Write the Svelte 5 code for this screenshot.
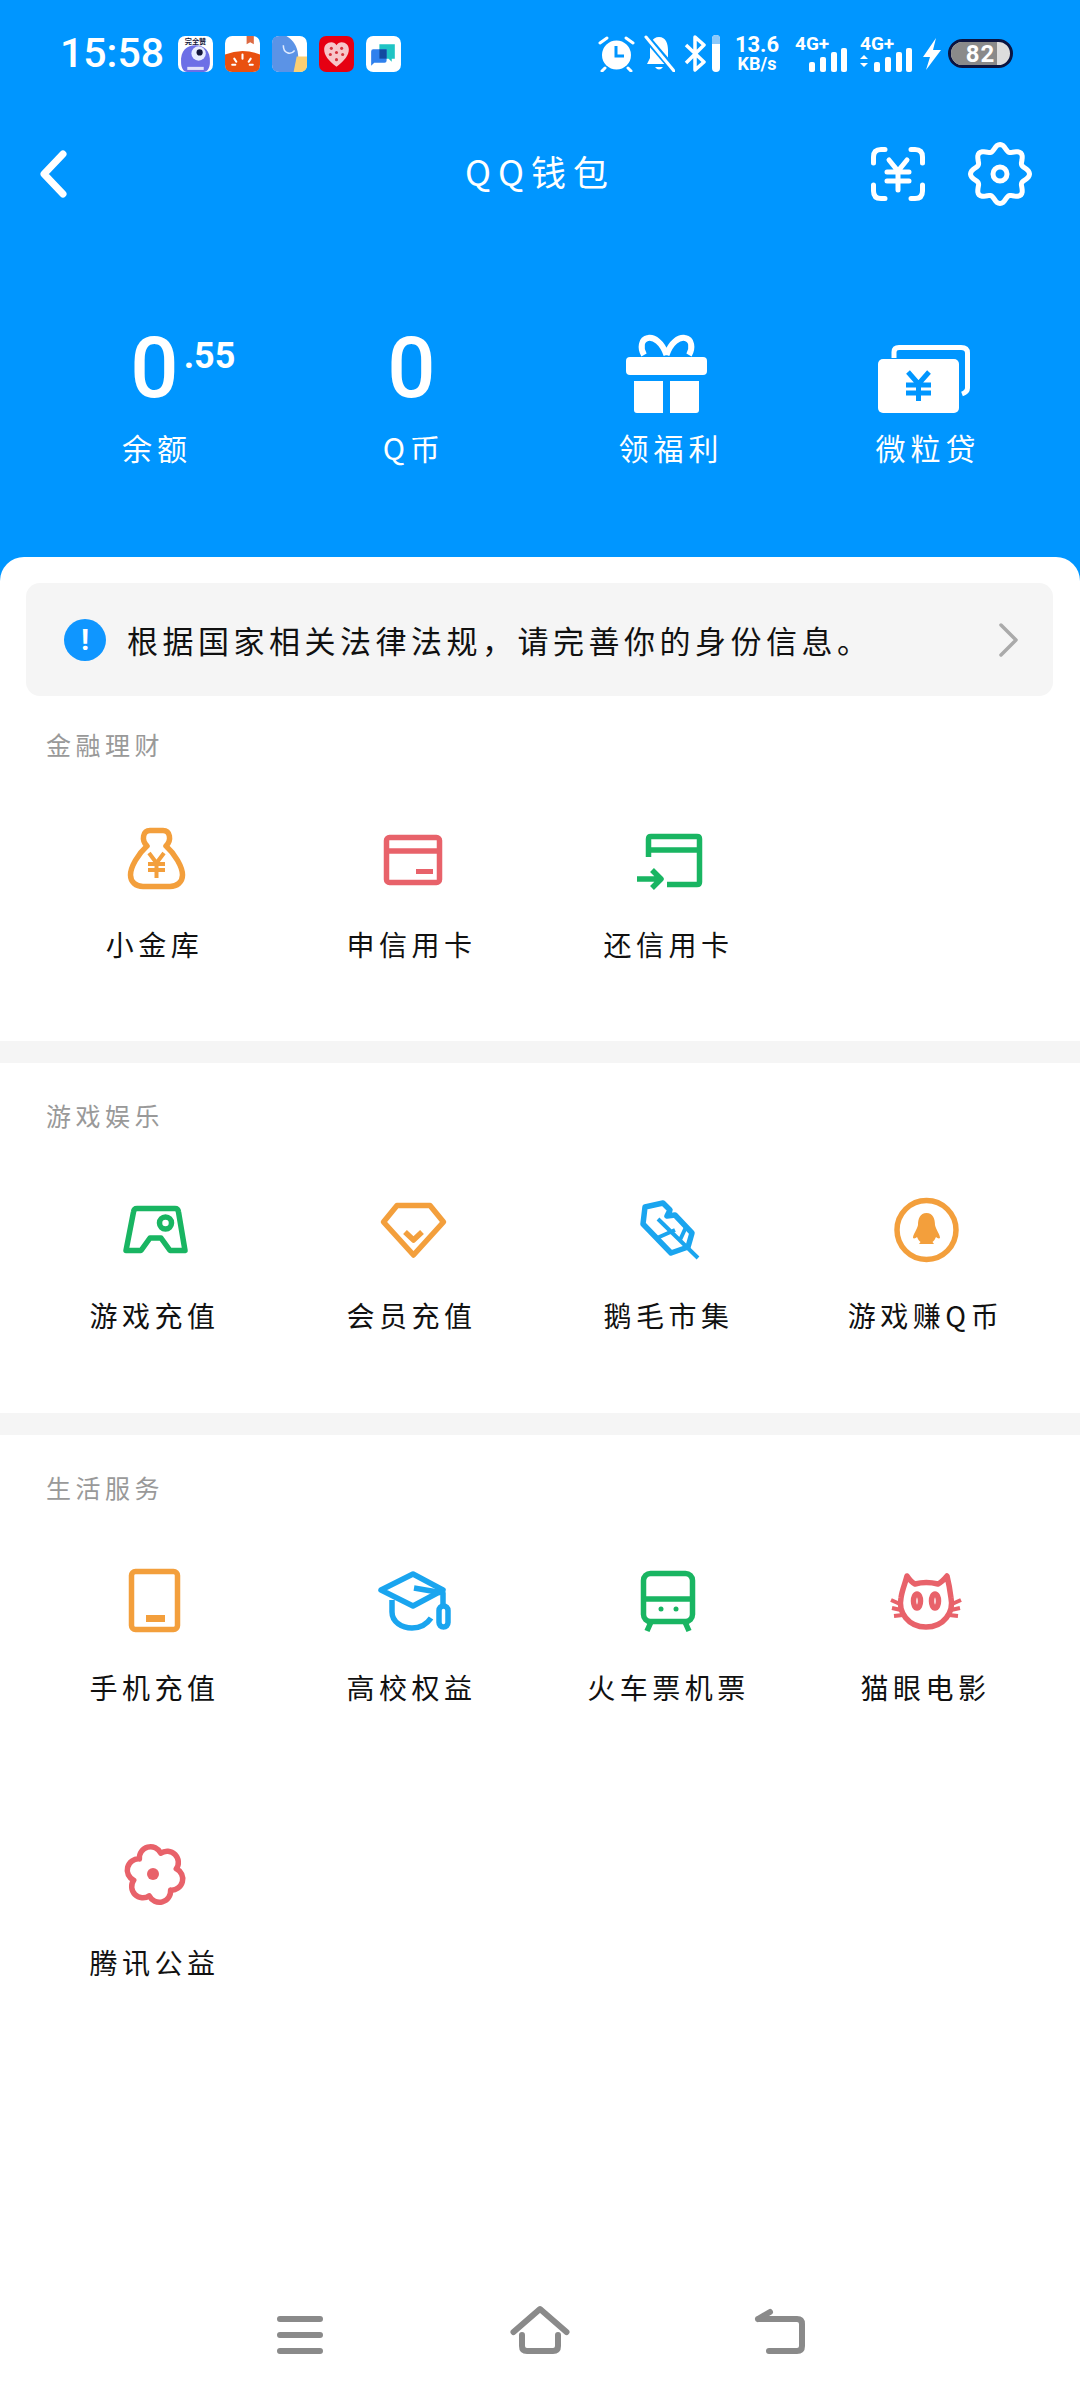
<script>
	// six scalloped petals around the middle of the flower icon
	function flowerPath() {
		let d = "";
		for (let k = 0; k <= 6; k++) {
			let a = ((k * 60 - 15) * Math.PI) / 180;
			let x = (40 + 22 * Math.cos(a)).toFixed(1);
			let y = (39.5 + 22 * Math.sin(a)).toFixed(1);
			d += k === 0 ? `M${x} ${y}` : ` A11.2 11.2 0 0 1 ${x} ${y}`;
		}
		return d + "Z";
	}

	// wavy ring for the settings gear, eight soft teeth
	function gearPath() {
		let pts = [];
		for (let k = 0; k < 120; k++) {
			let a = (k * 3 * Math.PI) / 180;
			let r = 26.5 + 3 * Math.cos(8 * a);
			pts.push(`${(33 + r * Math.sin(a)).toFixed(1)} ${(33 - r * Math.cos(a)).toFixed(1)}`);
		}
		return "M" + pts.join("L") + "Z";
	}

	const sections = [
		{
			title: "金融理财",
			first: true,
			items: [
				{ label: "小金库", color: "orange", icon: bag },
				{ label: "申信用卡", color: "red", icon: card },
				{ label: "还信用卡", color: "green", icon: repay },
			],
		},
		{
			title: "游戏娱乐",
			items: [
				{ label: "游戏充值", color: "green", icon: game },
				{ label: "会员充值", color: "orange", icon: diamond },
				{ label: "鹅毛市集", color: "blue", icon: feather },
				{ label: "游戏赚Q币", color: "orange", icon: penguin },
			],
		},
		{
			title: "生活服务",
			items: [
				{ label: "手机充值", color: "orange", icon: phone },
				{ label: "高校权益", color: "blue", icon: cap },
				{ label: "火车票机票", color: "green", icon: train },
				{ label: "猫眼电影", color: "red", icon: cat },
				{ label: "腾讯公益", color: "red", icon: flower },
			],
		},
	];
</script>

{#snippet bag()}
	<path d="M32 26C26 20 28 10.500 35 10.500H48C55 10.500 57 20 51 26C60 34 67.500 47 67.500 55C67.500 62 62 66.500 55 66.500H28C21 66.500 15.500 62 15.500 55C15.500 47 23 34 32 26Z" />
	<path class="thin" d="M34 33L41.500 43L49 33M33 44H50M33 50H50M41.500 43V58" />
{/snippet}

{#snippet card()}
	<rect x="14.500" y="17.500" width="53" height="45" rx="3" />
	<path d="M14.500 31H67.500" />
	<rect class="solid" x="44" y="49" width="17" height="5" />
{/snippet}

{#snippet repay()}
	<path d="M19.500 37V19Q19.500 16.500 22 16.500H68Q70.500 16.500 70.500 19V62Q70.500 64.500 68 64.500H38" />
	<path d="M19.500 30H70.500M8 59H30M23 50L32 59L23 68" />
{/snippet}

{#snippet game()}
	<path d="M22 20.500H60Q63 20.500 63.500 24L70 62.500H55L46 50H35L26 62.500H11L18.500 24Q19 20.500 22 20.500Z" />
	<circle cx="50.500" cy="35" r="6" />
{/snippet}

{#snippet diamond()}
	<path d="M25 17.500H58L71.500 34L41.500 67L11.500 34Z" />
	<path d="M33 44L41.500 52L50 44" />
{/snippet}

{#snippet feather()}
	<path d="M16 19L34 15L41 22L38 28L46 27L63 45L59 59L42 65L14 36Z" />
	<path class="thin" d="M29 31L69 70M28 50L46 42M51 52L57 39" />
{/snippet}

{#snippet penguin()}
	<circle cx="40.500" cy="42" r="29.500" />
	<path class="solid" d="M40.500 25C34 25 32 31 32 37C31 42 27 46 27 50C28 51 30 50 31 49C32 51 33 53 34.500 54L33 56H48L46.500 54C48 53 49 51 50 49C51 50 53 51 54 50C54 46 50 42 49 37C49 31 47 25 40.500 25Z" />
{/snippet}

{#snippet phone()}
	<rect x="16.500" y="11.500" width="46" height="58" rx="4" />
	<rect class="solid" x="31" y="55" width="19" height="7" />
{/snippet}

{#snippet cap()}
	<path d="M41 14L71 30L41 46L9 30Z" />
	<path d="M20 40V52C20 62 30 68 40 68C48 68 55 64 59 58M42 28L71 33V46" />
	<rect x="67" y="46" width="9" height="21" rx="4.500" />
{/snippet}

{#snippet train()}
	<rect x="14.500" y="13.500" width="49" height="48" rx="7" />
	<path d="M14.500 39H63.500M22 62L18 71M56 62L60 71" />
	<circle class="solid" cx="32" cy="49" r="2.500" />
	<circle class="solid" cx="47" cy="49" r="2.500" />
{/snippet}

{#snippet cat()}
	<path d="M21 16Q25 22 29 24Q40 21 52 24Q56 22 61 16C63 24 64 30 65 38C68 52 58 67 40 67C22 67 12 52 15 38C16 30 19 24 21 16Z" />
	<ellipse cx="31" cy="41" rx="3.500" ry="7" />
	<ellipse cx="49" cy="41" rx="3.500" ry="7" />
	<path class="thin" d="M5 40L14 44M6 48L15 50M8 56L17 55M75 40L66 44M74 48L65 50M72 56L63 55" />
{/snippet}

{#snippet flower()}
	<path d={flowerPath()} />
	<circle class="solid" cx="38" cy="39" r="6" />
{/snippet}

{#snippet signal(arrows)}
	<div class="signal">
		<span class="net">4G+</span>
		<svg viewBox="0 0 53 37" width="53" height="37">
			{#if arrows}
				<path d="M0 24L4 20L8 24ZM0 28L4 32L8 28Z" fill="#fff" />
			{/if}
			<rect x="14" y="27" width="6" height="10" rx="2" fill="#fff" />
			<rect x="25" y="22" width="6" height="15" rx="2" fill="#fff" />
			<rect x="36" y="17" width="6" height="20" rx="2" fill="#fff" />
			<rect x="46" y="13" width="6" height="24" rx="2" fill="#fff" />
		</svg>
	</div>
{/snippet}

<div class="page">
	<header>
		<div class="status">
			<span class="time">15:58</span>
			<div class="notes">
				<svg viewBox="0 0 34 35" width="35" height="36">
					<rect width="34" height="35" rx="7" fill="#fff" />
					<path d="M3 26C2 14 9 9 17 9S32 14 31 26C31 30 29 35 25 35H9C5 35 3 30 3 26Z" fill="#6d6fe6" />
					<circle cx="20" cy="17" r="7" fill="#e8ecff" />
					<circle cx="21" cy="16" r="3" fill="#14163a" />
					<rect x="9" y="30" width="16" height="3" fill="#fff" opacity=".8" />
					<text x="17" y="7.500" class="tiny">完全赞</text>
				</svg>
				<svg viewBox="0 0 34 35" width="35" height="36">
					<rect width="34" height="35" rx="7" fill="#fff" />
					<path d="M0 18Q17 11 34 18V28Q34 35 27 35H7Q0 35 0 28Z" fill="#e9500f" />
					<path d="M21 0H28V8L24.500 6L21 8Z" fill="#dc6a43" />
					<path d="M17 18V22M9 22L11 25M25 22L23 25M7 28H10M24 28H27" stroke="#fff" stroke-width="2" stroke-linecap="round" />
				</svg>
				<svg viewBox="0 0 34 35" width="35" height="36">
					<rect width="34" height="35" rx="7" fill="#fff" />
					<path d="M7 0H14C24 6 28 16 24 35H7Q0 35 0 28V7Q0 0 7 0Z" fill="#5b93e6" />
					<path d="M24 20H34V28Q34 35 27 35H21Z" fill="#fbcf73" />
					<path d="M11 9C11 17 18 19 22 14" fill="none" stroke="#dfeaff" stroke-width="1.500" />
				</svg>
				<svg viewBox="0 0 34 35" width="35" height="36">
					<rect width="34" height="35" rx="7" fill="#e60012" />
					<path d="M17 30C9 24 5 19 5 13C5 9 8 6 12 6C14 6 16 7 17 9C18 7 20 6 22 6C26 6 29 9 29 13C29 19 25 24 17 30Z" fill="#f7c6c9" />
					<circle cx="12" cy="12" r="1.500" fill="#d4323c" />
					<circle cx="22" cy="12" r="1.500" fill="#d4323c" />
					<circle cx="17" cy="16" r="1.500" fill="#d4323c" />
					<circle cx="11" cy="18" r="1.500" fill="#d4323c" />
					<circle cx="23" cy="18" r="1.500" fill="#d4323c" />
					<circle cx="17" cy="23" r="1.500" fill="#d4323c" />
				</svg>
				<svg viewBox="0 0 34 35" width="35" height="36">
					<rect width="34" height="35" rx="7" fill="#fff" />
					<path d="M13 8H28V22H25V25L22 22H13Z" fill="#1fc4c4" />
					<path d="M5 15Q5 13 7 13H20V24Q20 26 18 26H8L5 29Z" fill="#2f80ed" />
					<rect x="13" y="13" width="7" height="9" fill="#124aa0" />
				</svg>
			</div>
			<div class="sys">
				<svg class="alarm" viewBox="0 0 37 37" width="37" height="37">
					<circle cx="18.500" cy="20" r="14.500" fill="#fff" />
					<path d="M18 11V21H26" fill="none" stroke="#0096ff" stroke-width="3" />
					<path d="M2 8L9 3M28 3L35 8M7 33L4 36M30 33L33 36" fill="none" stroke="#fff" stroke-width="3" stroke-linecap="round" />
				</svg>
				<svg class="bell" viewBox="0 0 31 37" width="31" height="37">
					<path d="M15 2C8 2 6 9 6 15V23L3 29H27L24 23V15C24 9 22 2 15 2Z" fill="#fff" />
					<path d="M11 32Q15 37 19 32Z" fill="#fff" />
					<path d="M1 1L30 35" stroke="#0096ff" stroke-width="7" />
					<path d="M2 2L30 36" stroke="#fff" stroke-width="3" stroke-linecap="round" />
				</svg>
				<svg class="bt" viewBox="0 0 36 37" width="36" height="37">
					<path d="M2 10L20 27L11 35V2L20 10L2 28" fill="none" stroke="#fff" stroke-width="3.500" stroke-linejoin="round" />
					<rect x="28" width="8" height="37" rx="4" fill="#fff" />
					<path d="M28 9V4A4 4 0 0 1 36 4V9Z" fill="#8cc8fa" />
				</svg>
				<div class="speed">
					<span>13.6</span>
					<small>KB/s</small>
				</div>
				{@render signal(false)}
				{@render signal(true)}
				<svg class="bolt" viewBox="0 0 18 32" width="18" height="32">
					<path d="M13 0L0 19H7L3 32L18 12H10Z" fill="#fff" />
				</svg>
				<div class="battery">
					<div class="level"></div>
					<span>82</span>
				</div>
			</div>
		</div>

		<nav class="topbar">
			<svg class="back" viewBox="0 0 30 48" width="30" height="48">
				<path d="M25 4L6 24L25 44" />
			</svg>
			<h1>QQ钱包</h1>
			<div class="actions">
				<svg viewBox="0 0 54 54" width="54" height="54">
					<path d="M2.500 16V10Q2.500 2.500 10 2.500H14M40 2.500H44Q51.500 2.500 51.500 10V16M51.500 38V44Q51.500 51.500 44 51.500H40M14 51.500H10Q2.500 51.500 2.500 44V38" />
					<path d="M18 13L27 24L36 13M16 25H38M16 34H38M27 24V43" />
				</svg>
				<svg viewBox="0 0 66 66" width="66" height="66">
					<path d={gearPath()} />
					<circle cx="33" cy="33" r="7" />
				</svg>
			</div>
		</nav>

		<div class="stats">
			<div class="stat">
				<div class="figure">
					<span class="num">0<sup>.55</sup></span>
				</div>
				<span class="cap">余额</span>
			</div>
			<div class="stat">
				<div class="figure">
					<span class="num">0</span>
				</div>
				<span class="cap">Q币</span>
			</div>
			<div class="stat">
				<div class="figure shift">
					<svg viewBox="0 0 90 90" width="90" height="90">
						<path d="M44.500 27C40 14 32 9 26 10C19 11 18 20 22 27M44.500 27C49 14 57 9 63 10C70 11 71 20 67 27" fill="none" stroke="#fff" stroke-width="6" />
						<rect x="4" y="29" width="81" height="18" rx="4" fill="#fff" />
						<path d="M12 53H41V85H15Q12 85 12 82ZM48 53H77V82Q77 85 74 85H48Z" fill="#fff" />
					</svg>
				</div>
				<span class="cap">领福利</span>
			</div>
			<div class="stat">
				<div class="figure">
					<svg viewBox="0 0 90 90" width="90" height="90">
						<path d="M13 30V24Q13 19.500 18 19.500H80Q86.500 19.500 86.500 25V60Q86.500 64 81 66" fill="none" stroke="#fff" stroke-width="5" />
						<rect x="-3" y="31" width="81" height="54" rx="5" fill="#fff" />
						<path d="M27 44L37.500 56L48 44M25 57H50M25 65H50M37.500 56V73" fill="none" stroke="#0096ff" stroke-width="5" />
					</svg>
				</div>
				<span class="cap">微粒贷</span>
			</div>
		</div>
	</header>

	<main>
		<div class="notice">
			<span class="bang">!</span>
			<p>根据国家相关法律法规，请完善你的身份信息。</p>
			<svg class="more" viewBox="0 0 22 36" width="22" height="36">
				<path d="M3 3L18 18L3 33" />
			</svg>
		</div>

		{#each sections as section, i (section.title)}
			{#if i > 0}
				<div class="band"></div>
			{/if}
			<section class:first={section.first}>
				<h2>{section.title}</h2>
				<div class="grid">
					{#each section.items as item (item.label)}
						<div class="item">
							<svg class="icon {item.color}" viewBox="0 0 80 80" width="80" height="80">
								{@render item.icon()}
							</svg>
							<span class="label">{item.label}</span>
						</div>
					{/each}
				</div>
			</section>
		{/each}
	</main>

	<footer>
		<svg viewBox="0 0 60 60" width="60" height="60">
			<path d="M10 14H50M10 30H50M10 46H50" />
		</svg>
		<svg viewBox="0 0 60 60" width="60" height="60">
			<path d="M3.500 27L30 4L56.500 27M12 30V41Q12 46 17 46H43Q48 46 48 41V30" />
		</svg>
		<svg viewBox="0 0 60 60" width="60" height="60">
			<path d="M8 14H47Q52 14 52 19V41Q52 46 47 46H19M8 14L20 7" />
		</svg>
	</footer>
</div>

<style>
	:global(body) {
		margin: 0;
		background: #fff;
	}

	.page {
		width: 1080px;
		min-height: 2400px;
		display: flex;
		flex-direction: column;
		font-family: "Noto Sans CJK SC", sans-serif;
		overflow: hidden;
	}

	header {
		height: 581px;
		box-sizing: border-box;
		background: #0096ff;
		color: #fff;
	}

	.status {
		display: flex;
		align-items: center;
		height: 37px;
		padding: 35px 67px 0 60px;
	}

	.time {
		font: 500 41px/37px Roboto, sans-serif;
		width: 118px;
	}

	.notes {
		display: flex;
		gap: 12px;
	}

	.tiny {
		font: 700 7px "Noto Sans CJK SC", sans-serif;
		fill: #14163a;
		text-anchor: middle;
	}

	.sys {
		display: flex;
		align-items: center;
		margin-left: auto;
	}

	.bell {
		margin-left: 9px;
	}

	.bt {
		margin-left: 9px;
	}

	.speed {
		display: flex;
		flex-direction: column;
		align-items: center;
		width: 44px;
		margin-left: 15px;
		font: 700 22px/20px Roboto, sans-serif;
	}

	.speed small {
		font-size: 18px;
		line-height: 17px;
	}

	.signal {
		position: relative;
		width: 53px;
		height: 37px;
		margin-left: 16px;
	}

	:global(.signal + .signal) {
		margin-left: 12px;
	}

	.signal svg {
		display: block;
	}

	.net {
		position: absolute;
		left: 0;
		top: 0;
		font: 700 19px/17px Roboto, sans-serif;
	}

	.bolt {
		margin-left: 10px;
	}

	.battery {
		position: relative;
		box-sizing: border-box;
		width: 65px;
		height: 29px;
		margin-left: 7px;
		border: 3px solid #0b1440;
		border-radius: 15px;
		background: #ddd;
		overflow: hidden;
		display: flex;
		align-items: center;
		justify-content: center;
	}

	.level {
		position: absolute;
		left: 0;
		top: 0;
		bottom: 0;
		width: 78%;
		background: #8a8a8a;
	}

	.battery span {
		position: relative;
		font: 700 24px/1 Roboto, sans-serif;
		letter-spacing: 1px;
		color: #fff;
	}

	.topbar {
		display: flex;
		align-items: center;
		justify-content: space-between;
		height: 66px;
		margin-top: 69px;
		padding: 0 47px 0 38px;
		position: relative;
	}

	.topbar svg {
		fill: none;
		stroke: #fff;
		stroke-width: 5;
		stroke-linecap: round;
	}

	.back path {
		stroke-width: 7;
		stroke-linejoin: round;
	}

	h1 {
		position: absolute;
		left: 0;
		right: 0;
		top: 0;
		margin: 0;
		text-align: center;
		font-size: 35px;
		font-weight: 400;
		letter-spacing: 7px;
		line-height: 60px;
	}

	.actions {
		display: flex;
		align-items: center;
		gap: 42px;
	}

	.stats {
		display: grid;
		grid-template-columns: repeat(4, 257px);
		padding: 0 26px;
		margin-top: 121px;
	}

	.stat {
		display: flex;
		flex-direction: column;
		align-items: center;
	}

	.figure {
		height: 90px;
		display: flex;
		justify-content: center;
	}

	.figure.shift {
		margin-left: -4px;
	}

	.figure svg {
		overflow: visible;
	}

	.num {
		position: relative;
		font: 500 85px/80px Roboto, sans-serif;
	}

	.num sup {
		position: absolute;
		left: 100%;
		top: 6px;
		margin-left: 5px;
		font: 700 36px/44px Roboto, sans-serif;
	}

	.cap {
		margin-top: 9px;
		font-size: 30px;
		line-height: 40px;
		letter-spacing: 5px;
		padding-left: 5px;
	}

	main {
		flex: 1;
		background: #fff;
		border-radius: 24px 24px 0 0;
		margin-top: -24px;
		position: relative;
	}

	.notice {
		display: flex;
		align-items: center;
		height: 113px;
		box-sizing: border-box;
		margin: 26px 27px 0 26px;
		padding: 0 33px 0 38px;
		background: #f5f5f5;
		border-radius: 14px;
	}

	.bang {
		width: 42px;
		height: 42px;
		flex: none;
		border-radius: 50%;
		background: #0f96ff;
		color: #fff;
		font: 700 30px/42px Roboto, sans-serif;
		text-align: center;
	}

	.notice p {
		flex: 1;
		margin: 0 0 0 21px;
		font-size: 31px;
		line-height: 40px;
		letter-spacing: 4.5px;
		color: #111;
		white-space: nowrap;
	}

	.more {
		fill: none;
		stroke: #aaa;
		stroke-width: 3.5;
		stroke-linecap: round;
		stroke-linejoin: round;
	}

	.band {
		height: 22px;
		background: #f5f5f5;
	}

	section {
		padding: 32px 26px 78px;
	}

	section.first {
		padding-top: 28px;
		padding-bottom: 74px;
	}

	section.first h2 {
		margin-bottom: 56px;
	}

	section.first .label {
		margin-top: 24px;
		margin-bottom: 3px;
	}

	h2 {
		margin: 0 0 53px 20px;
		font-size: 25px;
		line-height: 40px;
		font-weight: 400;
		letter-spacing: 4.5px;
		color: #999;
	}

	.grid {
		display: grid;
		grid-template-columns: repeat(4, 257px);
		row-gap: 128px;
	}

	.item {
		display: flex;
		flex-direction: column;
		align-items: center;
	}

	.icon {
		overflow: visible;
		fill: none;
		stroke-width: 5.5;
		stroke-linejoin: round;
	}

	.icon :global(.solid) {
		stroke: none;
		fill: var(--tint);
	}

	.icon :global(.thin) {
		stroke-width: 4;
	}

	.orange {
		stroke: #f39f3c;
		--tint: #f39f3c;
	}

	.red {
		stroke: #e8626a;
		--tint: #e8626a;
	}

	.green {
		stroke: #19b562;
		--tint: #19b562;
	}

	.blue {
		stroke: #1aa5ef;
		--tint: #1aa5ef;
	}

	.label {
		margin-top: 27px;
		font-size: 28px;
		line-height: 40px;
		letter-spacing: 4.5px;
		color: #111;
		white-space: nowrap;
	}

	footer {
		display: flex;
		justify-content: center;
		gap: 180px;
		padding-bottom: 35px;
		background: #fff;
		position: relative;
	}

	footer svg {
		fill: none;
		stroke: #8a8a8a;
		stroke-width: 6;
		stroke-linecap: round;
		stroke-linejoin: round;
	}
</style>
